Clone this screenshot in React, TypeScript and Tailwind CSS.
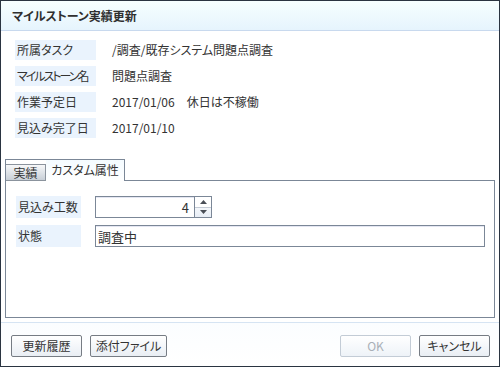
import React from "react";

const rows: [string, React.ReactNode, string][] = [
  ["所属タスク", "/調査/既存システム問題点調査", ""],
  ["マイルストーン名", "問題点調査", "tracking-[-2px]"],
  [
    "作業予定日",
    <span key="d">
      2017/01/06<span className="ml-[12px]">休日は不稼働</span>
    </span>,
    "",
  ],
  ["見込み完了日", "2017/01/10", ""],
];

function Btn({ label, w, disabled }: { label: string; w: string; disabled?: boolean }) {
  return (
    <div
      className={
        "h-[22px] flex items-center justify-center rounded-[2px] border " +
        w +
        (disabled
          ? " border-[#c3ccd6] text-[#a9b0b8] bg-linear-to-b from-[#ffffff] to-[#eef3f8]"
          : " border-[#767c84] text-[#333] bg-linear-to-b from-[#ffffff] to-[#e9eef4]")
      }
    >
      {label}
    </div>
  );
}

export default function App() {
  return (
    <div className="w-[500px] h-[367px] border border-[#2a3441] flex flex-col bg-white text-[12px] text-[#333] font-['Noto_Sans_CJK_JP','Noto_Sans',sans-serif] [font-feature-settings:'palt'] leading-none whitespace-nowrap">
      <div className="h-[30px] shrink-0 border-b border-[#c8d9ee] bg-linear-to-b from-[#f6ffff] to-[#e6f4fd] pl-[11px] flex items-center font-bold text-[#2f2f2f]">
        マイルストーン実績更新
      </div>
      <div className="pt-[9px] pl-[14px] flex flex-col gap-[6px]">
        {rows.map(([l, v, t], i) => (
          <div key={i} className="flex h-[20px] items-center">
            <div className={"w-[81px] h-full bg-[#eaf3fd] pl-[2px] flex items-center " + t}>{l}</div>
            <div className="pl-[16px]">{v}</div>
          </div>
        ))}
      </div>
      <div className="mt-[21px] ml-[4px] relative z-10 -mb-[1px] flex">
        <div className="h-[22px] w-[120px] border-l border-t border-r border-[#7b8797] bg-white flex">
          <div className="mt-[4px] h-[17px] w-[40px] border-r border-t border-b border-[#8b939d] bg-linear-to-b from-[#f7f8f9] to-[#c8cfd7] flex items-center justify-center">
            実績
          </div>
          <div className="flex-1 flex items-center justify-center bg-linear-to-b from-[#f4fbff] to-white pb-[1px]">
            カスタム属性
          </div>
        </div>
      </div>
      <div className="mx-[4px] h-[138px] shrink-0 border border-[#7b8797] bg-white pt-[15px] pl-[10px] flex flex-col gap-[7px]">
        <div className="flex h-[22px]">
          <div className="w-[65px] h-full bg-[#eaf3fd] pl-[2px] flex items-center">見込み工数</div>
          <div className="ml-[14px] w-[117px] h-full border border-[#7b8797] flex shadow-[inset_0_1px_0_#e4e6f2]">
            <div className="flex-1 flex items-center justify-end pr-[5px] text-[13px]">4</div>
            <div className="w-[17px] border-l border-[#7b8797] flex flex-col">
              <div className="flex-1 border-b border-[#c5ccd6] flex items-center justify-center bg-white">
                <svg width="7" height="4" viewBox="0 0 7 4">
                  <path d="M3.5 0 L7 4 L0 4 Z" fill="#4a4f57" />
                </svg>
              </div>
              <div className="flex-1 flex items-center justify-center bg-linear-to-b from-[#f4f7fb] to-[#e8eef6]">
                <svg width="7" height="4" viewBox="0 0 7 4">
                  <path d="M0 0 L7 0 L3.5 4 Z" fill="#4a4f57" />
                </svg>
              </div>
            </div>
          </div>
        </div>
        <div className="flex h-[22px]">
          <div className="w-[65px] h-full bg-[#eaf3fd] pl-[2px] flex items-center">状態</div>
          <div className="ml-[14px] w-[390px] h-full border border-[#7b8797] flex items-center pl-[2px] text-[13px] shadow-[inset_0_1px_0_#e4e6f2]">
            調査中
          </div>
        </div>
      </div>
      <div className="mt-[4px] flex-1 border-t border-[#d6e4f3] bg-linear-to-b from-[#fbfdff] to-white pt-[12px] pl-[10px] pr-[9px] flex items-start">
        <div className="flex gap-[8px]">
          <Btn label="更新履歴" w="w-[71px]" />
          <Btn label="添付ファイル" w="w-[77px]" />
        </div>
        <div className="ml-auto flex gap-[8px]">
          <Btn label="OK" w="w-[71px]" disabled />
          <Btn label="キャンセル" w="w-[71px]" />
        </div>
      </div>
    </div>
  );
}
